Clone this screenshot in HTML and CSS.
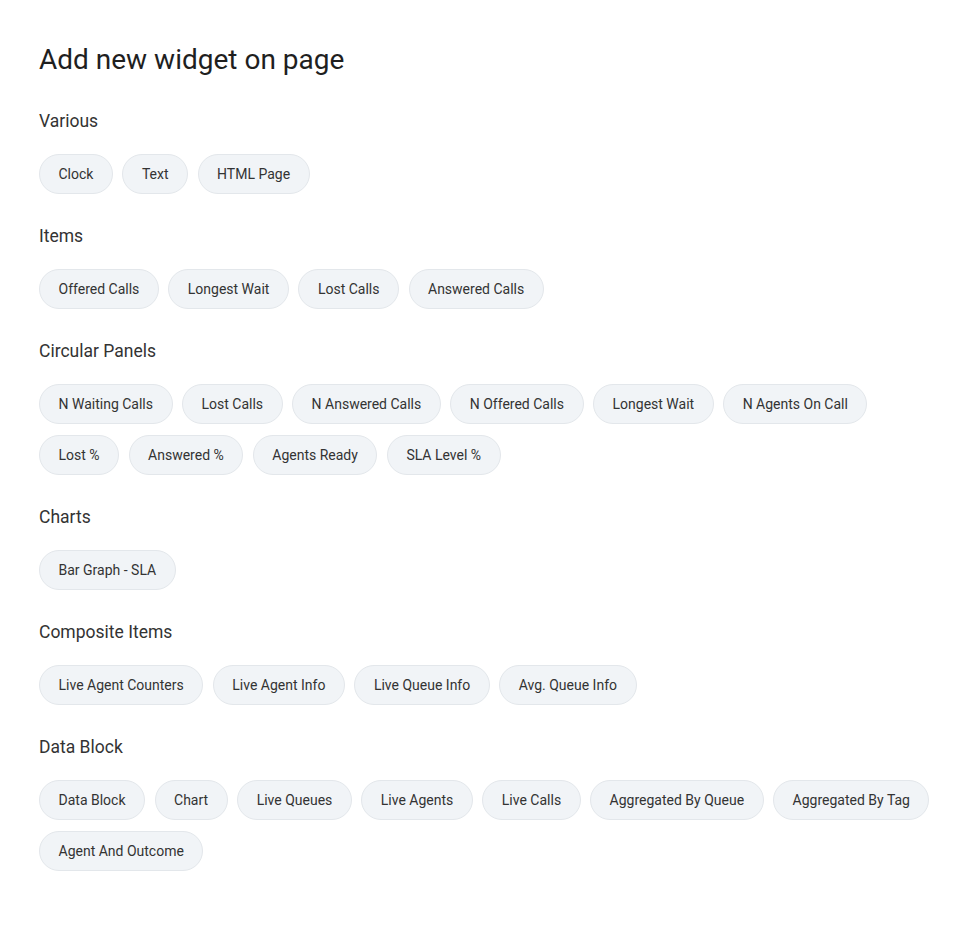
FILE: index.html
```html
<!DOCTYPE html>
<html lang="en">
<head>
  <meta charset="UTF-8" />
  <meta name="viewport" content="width=device-width, initial-scale=1" />
  <title>Add new widget on page</title>
  <link rel="stylesheet" href="styles.css">
</head>
<body>
  <div class="widget-picker">
    <h1>Add new widget on page</h1>

    <div class="group">
      <h3>Various</h3>
      <div class="chips">
        <button type="button" class="chip">Clock</button>
        <button type="button" class="chip">Text</button>
        <button type="button" class="chip">HTML Page</button>
      </div>
    </div>

    <div class="group">
      <h3>Items</h3>
      <div class="chips">
        <button type="button" class="chip">Offered Calls</button>
        <button type="button" class="chip">Longest Wait</button>
        <button type="button" class="chip">Lost Calls</button>
        <button type="button" class="chip">Answered Calls</button>
      </div>
    </div>

    <div class="group">
      <h3>Circular Panels</h3>
      <div class="chips">
        <button type="button" class="chip">N Waiting Calls</button>
        <button type="button" class="chip">Lost Calls</button>
        <button type="button" class="chip">N Answered Calls</button>
        <button type="button" class="chip">N Offered Calls</button>
        <button type="button" class="chip">Longest Wait</button>
        <button type="button" class="chip">N Agents On Call</button>
        <button type="button" class="chip">Lost %</button>
        <button type="button" class="chip">Answered %</button>
        <button type="button" class="chip">Agents Ready</button>
        <button type="button" class="chip">SLA Level %</button>
      </div>
    </div>

    <div class="group">
      <h3>Charts</h3>
      <div class="chips">
        <button type="button" class="chip">Bar Graph - SLA</button>
      </div>
    </div>

    <div class="group">
      <h3>Composite Items</h3>
      <div class="chips">
        <button type="button" class="chip">Live Agent Counters</button>
        <button type="button" class="chip">Live Agent Info</button>
        <button type="button" class="chip">Live Queue Info</button>
        <button type="button" class="chip">Avg. Queue Info</button>
      </div>
    </div>

    <div class="group">
      <h3>Data Block</h3>
      <div class="chips">
        <button type="button" class="chip">Data Block</button>
        <button type="button" class="chip">Chart</button>
        <button type="button" class="chip">Live Queues</button>
        <button type="button" class="chip">Live Agents</button>
        <button type="button" class="chip">Live Calls</button>
        <button type="button" class="chip">Aggregated By Queue</button>
        <button type="button" class="chip">Aggregated By Tag</button>
        <button type="button" class="chip">Agent And Outcome</button>
      </div>
    </div>
  </div>
</body>
</html>
```

FILE: styles.css
```css
body {
  font-family: Roboto, "Liberation Sans", Arial, sans-serif;
  background: #ffffff;
  color: #2b2b2b;
  margin: 0;
}
.widget-picker {
  padding: 40px 39px;
}
h1 {
  font-size: 28px;
  font-weight: 400;
  color: #1f1f1f;
  margin: 0 0 30px;
  line-height: 40px;
}
.group {
  margin-bottom: 31px;
}
h3 {
  font-size: 17.5px;
  font-weight: 400;
  color: #333;
  margin: 0 0 22px;
  line-height: 22px;
}
.chips {
  display: flex;
  flex-wrap: wrap;
  gap: 11px 9.5px;
}
.chip {
  height: 40px;
  padding: 0 18.5px;
  background: #f1f4f7;
  border: 1px solid #e3e7eb;
  border-radius: 20px;
  font-family: inherit;
  font-size: 14px;
  color: #333;
  cursor: pointer;
}
```
